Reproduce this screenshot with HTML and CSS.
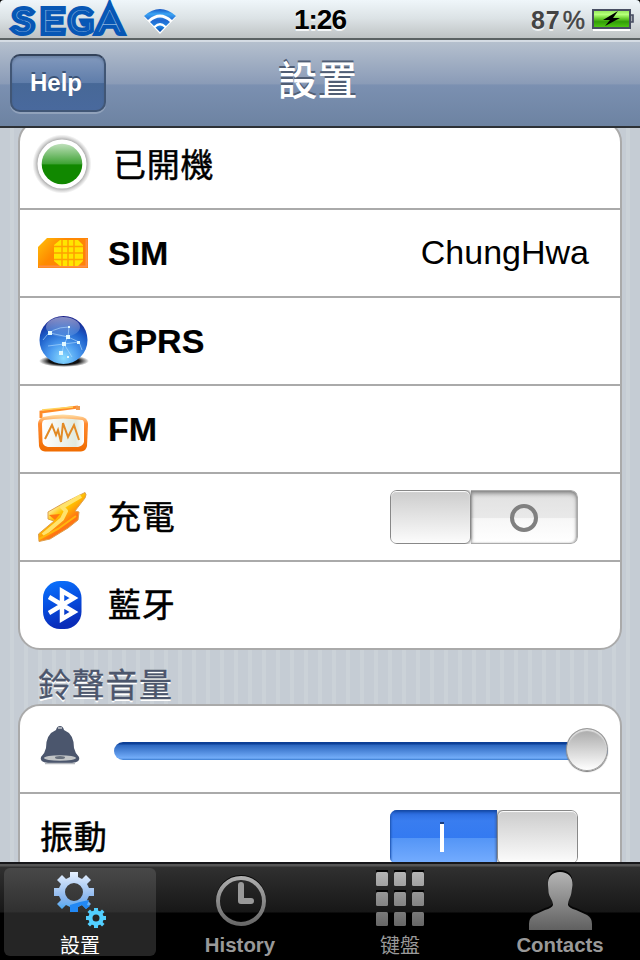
FILE: index.html
```html
<!DOCTYPE html>
<html lang="zh-Hant">
<head>
<meta charset="utf-8">
<title>設置</title>
<link rel="stylesheet" href="styles.css">
</head>
<body>
<div class="phone">
  <header class="status">
    <div class="status-left">
      <svg class="sega" width="122" height="40" viewBox="0 0 122 40">
        <text x="5" y="31.500" textLength="20" lengthAdjust="spacingAndGlyphs">S</text><text x="33" y="31.500" textLength="22" lengthAdjust="spacingAndGlyphs">E</text><text x="61" y="31.500" textLength="23" lengthAdjust="spacingAndGlyphs">G</text><text x="90" y="31.500" textLength="23" lengthAdjust="spacingAndGlyphs">A</text>
      </svg>
      <svg class="wifi" width="34" height="28" viewBox="0 0 34 28">
        <defs><linearGradient id="wf" x1="0" y1="0" x2="0" y2="1"><stop offset="0" stop-color="#1758c4"/><stop offset=".22" stop-color="#3ba4f4"/><stop offset=".5" stop-color="#2167cf"/><stop offset=".75" stop-color="#2387e5"/><stop offset="1" stop-color="#0747a9"/></linearGradient></defs>
        <path d="M1 10Q17-5 33 10L17 27Z" fill="#fff"/>
        <path d="M1 9Q17-5 33 9L29 13Q17 2 5 13ZM7 15Q17 6 27 15L23 19Q17 13 11 19ZM12.500 20.500Q17 16.500 21.500 20.500L17 25Z" fill="url(#wf)"/>
      </svg>
    </div>
    <div class="clock">1:26</div>
    <div class="power">
      <span>87<i>%</i></span>
      <svg width="42" height="22" viewBox="0 0 42 22">
        <defs><linearGradient id="bt" x1="0" y1="0" x2="0" y2="1"><stop offset="0" stop-color="#8de354"/><stop offset=".25" stop-color="#b5ff79"/><stop offset=".48" stop-color="#67cc2b"/><stop offset=".65" stop-color="#329d08"/><stop offset="1" stop-color="#52cc15"/></linearGradient></defs>
        <path d="M1 21H38" stroke="#fff" stroke-width="2"/>
        <path d="M38 6h3v7h-3" fill="#a8adb4" stroke="#474d62" stroke-width="1.6"/>
        <rect x="1" y="1" width="37" height="18" fill="url(#bt)" stroke="#474d62" stroke-width="2"/>
        <path d="M26 2L11 11H18L13 17L28 9H21Z" fill="#000"/>
      </svg>
    </div>
  </header>
  <nav class="navbar">
    <button class="help">Help</button>
    <h1>設置</h1>
  </nav>
  <main class="content">
    <section class="card first">
      <div class="row state">
        <svg class="ico" width="60" height="60" viewBox="0 0 60 60">
          <defs>
            <radialGradient id="halo"><stop offset=".84" stop-color="#b5b5b5"/><stop offset=".9" stop-color="#d5d5d5"/><stop offset="1" stop-color="#fff"/></radialGradient>
            <linearGradient id="gr" x1="0" y1="0" x2="0" y2="1"><stop offset="0" stop-color="#bfe0bb"/><stop offset=".5" stop-color="#3ea234"/><stop offset=".52" stop-color="#118800"/><stop offset="1" stop-color="#118800"/></linearGradient>
          </defs>
          <circle cx="30" cy="30" r="29.500" fill="url(#halo)"/><circle cx="30" cy="30" r="24.500" fill="#fff"/><circle cx="30" cy="30" r="20.300" fill="url(#gr)"/>
        </svg>
        <span class="label">已開機</span>
      </div>
      <div class="row">
        <svg class="ico" width="50" height="30" viewBox="0 0 50 30">
          <defs><linearGradient id="sim" x1="0" y1="0" x2="1" y2=".5"><stop offset="0" stop-color="#ffc20a"/><stop offset=".45" stop-color="#ff8a00"/><stop offset="1" stop-color="#ff8208"/></linearGradient></defs>
          <path d="M0 9L9 0H50V30H0Z" fill="url(#sim)"/><path d="M1 28.500H49M48.500 1V29" stroke="#ff8e45" stroke-width="2"/>
          <path d="M22 2H40L45 7V23L40 28H22L16 23V7Z" fill="#ffe500"/>
          <path d="M24 2V28M30 2V28M36 2V28M16 8.500H45M16 15H45M16 21.500H45" stroke="#ffa000" stroke-width="1.500"/>
        </svg>
        <span class="label en">SIM</span><span class="value">ChungHwa</span>
      </div>
      <div class="row">
        <svg class="ico" width="50" height="50" viewBox="0 0 50 50">
          <defs>
            <radialGradient id="gl" cx=".5" cy=".88" r=".88"><stop offset="0" stop-color="#8adcff"/><stop offset=".35" stop-color="#4c9cf0"/><stop offset=".7" stop-color="#1b5cc8"/><stop offset="1" stop-color="#161b86"/></radialGradient>
            <radialGradient id="sh"><stop offset=".6" stop-color="#111"/><stop offset="1" stop-color="#111" stop-opacity="0"/></radialGradient>
            <linearGradient id="gs" x1="0" y1="0" x2="0" y2="1"><stop offset="0" stop-color="#fff" stop-opacity=".5"/><stop offset="1" stop-color="#fff" stop-opacity=".08"/></linearGradient>
          </defs>
          <ellipse cx="26" cy="45" rx="25" ry="6" fill="url(#sh)"/>
          <circle cx="25.500" cy="24" r="24" fill="url(#gl)"/>
          <ellipse cx="25" cy="11" rx="17" ry="10" fill="url(#gs)"/>
          <path d="M5 24Q13 11 31 11L30 21L26 28L24 37M12 17L30 21L41 26L44 34M26 28L41 26M10 30L26 28L34 41" fill="none" stroke="#b6ddff" stroke-opacity=".6" stroke-width="1"/>
          <path d="M10 15h4v4h-4zM28 19h4v4h-4zM24 26h4v4h-4zM21 35h4v4h-4zM39 25h3v3h-3zM30 10h2v2h-2zM29 40h2v2h-2z" fill="#e3f9ff"/>
        </svg>
        <span class="label en">GPRS</span>
      </div>
      <div class="row">
        <svg class="ico" width="50" height="46" viewBox="0 0 50 46">
          <defs><linearGradient id="fm" x1="0" y1="0" x2="0" y2="1"><stop offset="0" stop-color="#ffe1aa"/><stop offset=".25" stop-color="#ff8a30"/><stop offset="1" stop-color="#f06c00"/></linearGradient><linearGradient id="screen"><stop offset="0" stop-color="#fff"/><stop offset=".8" stop-color="#e1eadf"/><stop offset="1" stop-color="#fff"/></linearGradient></defs>
          <path d="M3 12V6L40 1" fill="none" stroke="#ff8b28" stroke-width="3"/><path d="M4 4L35 1" stroke="#ffd35b" stroke-width="1.500"/><path d="M38 0h4v4h-4z" fill="#f19a4e"/>
          <path d="M5 11Q25 6 45 11Q50 13 50 18L49 40Q48 45 43 45.500H7Q2 45 1 40L0 18Q0 13 5 11Z" fill="url(#fm)"/>
          <path d="M6 14Q25 11 44 14Q46 14 46 18V36Q45 40 40 41H10Q5 40 4.500 36L4 18Q4 15 6 14Z" fill="url(#screen)"/>
          <path d="M7 33L14 19L18 29L20 24L23 36L25 17L30 31L36 19L41 34" fill="none" stroke="#e28a24" stroke-width="2"/>
        </svg>
        <span class="label en">FM</span>
      </div>
      <div class="row">
        <svg class="ico" width="50" height="50" viewBox="0 0 50 50">
          <defs><linearGradient id="el" x1="0" y1="0" x2=".8" y2="1"><stop offset="0" stop-color="#ffb53e"/><stop offset=".33" stop-color="#fff0a1"/><stop offset=".48" stop-color="#ffc400"/><stop offset=".68" stop-color="#ff7314"/><stop offset="1" stop-color="#ff8b16"/></linearGradient></defs>
          <path d="M47 .5Q49 2 47 6L37 19L41 20L40 28L30 36L12 47L1 49.500L.5 42L16 29L10 27V20L24 12Z" fill="url(#el)" stroke="#dda04e"/>
          <path d="M43 4L24 15L28 19L24 27L5 43" fill="none" stroke="#ffe36c" stroke-width="4" stroke-linejoin="round"/><path d="M11 23L22 22L17 28Z" fill="#ff7810"/><path d="M1 47L20 37L38 24" fill="none" stroke="#ffb60d" stroke-width="2"/>
        </svg>
        <span class="label">充電</span>
        <div class="switch off"><div class="knob"></div><div class="face"><i class="ring"></i></div></div>
      </div>
      <div class="row">
        <svg class="ico" width="50" height="48" viewBox="0 0 50 48">
          <defs><linearGradient id="bl" x1="0" y1="0" x2=".25" y2="1"><stop offset="0" stop-color="#0b75ff"/><stop offset=".5" stop-color="#0650e2"/><stop offset="1" stop-color="#0a2cb8"/></linearGradient></defs>
          <rect x="5" y="0" width="38.500" height="48" rx="17" fill="url(#bl)"/>
          <path d="M11 16L36 31L24 38V10L36 17L11 32" fill="none" stroke="#fff" stroke-width="4.500"/>
        </svg>
        <span class="label">藍牙</span>
      </div>
    </section>
    <h2>鈴聲音量</h2>
    <section class="card second">
      <div class="row volume">
        <svg class="bell" width="40" height="40" viewBox="0 0 40 40">
          <path d="M16 4Q17 0 20 0Q23 0 24 4Q34 8 34 22Q35 27 39 31Q41 36 32 37H8Q-1 36 1 31Q5 27 6 22Q6 8 16 4Z" fill="#4b566d"/>
          <ellipse cx="20" cy="32" rx="16" ry="2.800" fill="#c2c5c7"/><ellipse cx="20" cy="31.500" rx="5" ry="1.500" fill="#68707d"/><path d="M5 37.500H35" stroke="#b6b9be" stroke-width="1.500"/><path d="M18 2H22" stroke="#a9adb6" stroke-width="2"/>
        </svg>
        <div class="slider"><div class="thumb"></div></div>
      </div>
      <div class="row vibrate"><span class="label">振動</span><div class="switch on"><div class="face"><i class="bar"></i></div><div class="knob"></div></div></div>
    </section>
  </main>
  <footer class="tabs">
    <div class="tab active">
      <svg width="56" height="58" viewBox="0 0 56 58">
        <defs><linearGradient id="g1" x1="0" y1="0" x2="0" y2="1"><stop offset="0" stop-color="#e7f1ff"/><stop offset=".65" stop-color="#89b5ed"/><stop offset=".8" stop-color="#6db0f0"/><stop offset="1" stop-color="#2ba5f4"/></linearGradient>
        <path id="cog" d="M-4-20H4V-15L8-13L12-17L17-12L13-8L15-4H20V4H15L13 8L17 12L12 17L8 13L4 15V20H-4V15L-8 13L-12 17L-17 12L-13 8L-15 4H-20V-4H-15L-13-8L-17-12L-12-17L-8-13L-4-15ZM9 0A9 9 0 1 0-9 0A9 9 0 1 0 9 0Z" fill-rule="evenodd"/></defs>
        <use href="#cog" x="22" y="20" fill="url(#g1)"/><path d="M18 33Q26 30 37 28L35 33L38 34L34 37L30 33L26 35V40H18Z" fill="#2288f4"/><g transform="translate(44 46) scale(.5)"><circle r="11" fill="none" stroke="#52cfff" stroke-width="8"/><use href="#cog" fill="#52cfff"/></g>
      </svg>
      <span>設置</span>
    </div>
    <div class="tab">
      <svg width="56" height="58" viewBox="0 0 56 58">
        <defs><linearGradient id="gy" gradientUnits="userSpaceOnUse" x1="0" y1="0" x2="0" y2="58"><stop offset="0" stop-color="#b5b5b5"/><stop offset="1" stop-color="#606060"/></linearGradient></defs>
        <circle cx="29" cy="28" r="23" fill="none" stroke="#050505" stroke-width="4"/>
        <circle cx="29" cy="29" r="23" fill="none" stroke="url(#gy)" stroke-width="4"/><path d="M29 13V29H39" fill="none" stroke="#999" stroke-width="6" stroke-linecap="round" stroke-linejoin="round"/>
      </svg>
      <span class="en">History</span>
    </div>
    <div class="tab">
      <svg width="56" height="58" viewBox="0 0 56 58">
        <g fill="#050505"><rect x="4" y="-2" width="12" height="13"/><rect x="22" y="-2" width="12" height="13"/><rect x="40" y="-2" width="12" height="13"/><rect x="4" y="18" width="12" height="13"/><rect x="22" y="18" width="12" height="13"/><rect x="40" y="18" width="12" height="13"/></g>
        <g fill="url(#gy)"><rect x="4" y="0" width="12" height="14" rx="1.500"/><rect x="22" y="0" width="12" height="14" rx="1.500"/><rect x="40" y="0" width="12" height="14" rx="1.500"/><rect x="4" y="20" width="12" height="14" rx="1.500"/><rect x="22" y="20" width="12" height="14" rx="1.500"/><rect x="40" y="20" width="12" height="14" rx="1.500"/><rect x="4" y="40" width="12" height="14" rx="1.500"/><rect x="22" y="40" width="12" height="14" rx="1.500"/><rect x="40" y="40" width="12" height="14" rx="1.500"/></g>
      </svg>
      <span>键盤</span>
    </div>
    <div class="tab">
      <svg width="66" height="58" viewBox="0 0 66 58">
        <path d="M33 0C41 0 46 5 45.500 13L44.500 20C44 25 41 28 41 33Q42 36 49 38L60 43Q65 46 65 52V58H2V52Q2 46 7 43L18 38Q25 36 26 33C26 28 22 25 21.500 20L21 13C20.500 5 25 0 33 0Z" fill="#050505" transform="translate(0 -2)"/>
        <path d="M33 0C41 0 46 5 45.500 13L44.500 20C44 25 41 28 41 33Q42 36 49 38L60 43Q65 46 65 52V58H2V52Q2 46 7 43L18 38Q25 36 26 33C26 28 22 25 21.500 20L21 13C20.500 5 25 0 33 0Z" fill="url(#gy)"/>
      </svg>
      <span class="en">Contacts</span>
    </div>
  </footer>
</div>
</body>
</html>
```
FILE: styles.css
```css
* { box-sizing: border-box; }
body { margin: 0; background: #000; }
svg { display: block; flex: none; overflow: visible; }
.phone { width: 640px; height: 960px; overflow: hidden; display: flex; flex-direction: column; font-family: "Liberation Sans", "Noto Sans CJK TC", sans-serif; }
.status { height: 40px; flex: none; display: grid; grid-template-columns: 1fr auto 1fr; background: linear-gradient(#eff6fa, #dce3e6 45%, #bec3c4 38px, #5b6263 38px); border-radius: 4px 4px 0 0; }
.status-left { display: flex; padding: 0 0 0 8px; gap: 13px; }
.wifi { margin-top: 7px; }
.sega text { font: 100 31px Lato, sans-serif; fill: #c4dcef; stroke: #0757b5; stroke-width: 8px; stroke-linejoin: miter; paint-order: stroke; }
.clock { font-weight: 700; font-size: 28px; line-height: 40px; letter-spacing: -1px; text-shadow: 0 2px 0 #f4f7f8; }
.power { display: flex; justify-content: flex-end; align-items: flex-start; padding: 9px 6px 0 0; gap: 6px; font-weight: 700; font-size: 25px; line-height: 22px; color: #444; text-shadow: 0 2px 0 #eef1f2; letter-spacing: 1px; }
.power i { font-style: normal; font-weight: 400; margin-left: 2px; -webkit-text-stroke: .5px #444; }
.navbar { height: 88px; flex: none; display: grid; grid-template-columns: 106px 1fr 106px; align-items: start; background: linear-gradient(#b5c0ce, #8a9bb7 50%, #7b90b1 51%, #6d83a2); border-top: 2px solid #d5dce4; border-bottom: 2px solid #2d3136; }
.help { width: 96px; height: 58px; margin: 12px 0 0 10px; padding: 0 4px 0 0; border: 2px solid #415675; border-top-color: #33425a; border-radius: 10px; background: linear-gradient(#8299bd, #5f7daa 50%, #476897 51%, #49699d); box-shadow: 0 2px 0 #91a2bb, inset 0 2px 2px #43577755; color: #fff; font: 700 24px/54px "Liberation Sans", sans-serif; text-shadow: 0 -2px 0 #3b5376; }
h1 { margin: 0 5px 0 0; text-align: center; font-size: 40px; line-height: 79px; font-weight: 500; color: #fff; text-shadow: 0 -2px 0 #505e74; }
.content { height: 734px; flex: none; overflow: hidden; padding: 0 18px; background: repeating-linear-gradient(90deg, #c5ccd4 0 10px, #cbd2d8 10px 14px); }
.card { background: #fff; border: 2px solid #aaa; border-radius: 22px; }
.first { margin-top: -8px; height: 530px; }
.row { height: 88px; border-bottom: 2px solid #aaa; display: flex; align-items: center; padding: 0 42px 0 18px; }
.row:last-child { border-bottom: 0; height: 86px; }
.ico { margin-right: 20px; }
.state .ico { margin-left: -6px; margin-right: 21px; margin-top: -2px; }
.label { font-size: 33px; line-height: 50px; padding-top: 2px; font-weight: 400; -webkit-text-stroke: .5px #000; letter-spacing: .7px; color: #000; }
.label.en { font-size: 34px; font-weight: 700; letter-spacing: 0; padding-top: 0; -webkit-text-stroke: .2px #000; }
.value { margin-left: auto; margin-right: -11px; margin-top: -2px; font-size: 34px; }
.switch { width: 188px; height: 54px; margin-left: auto; border-radius: 7px; overflow: hidden; display: flex; }
.knob { width: 81px; flex: none; border: 1px solid #888; border-radius: 6px; background: linear-gradient(#ccc, #fcfcfc); box-shadow: 0 0 3px #666, inset 0 1px 1px #fff; position: relative; }
.face { flex: 1; display: flex; align-items: center; justify-content: center; }
.off .face { border: 1px solid #aaa; border-left: 0; border-radius: 0 7px 7px 0; background: linear-gradient(#e1e1e1, #e9e9e9 52%, #f7f7f7 53%, #fff); box-shadow: inset 0 3px 5px -1px #777, inset -1px 0 2px #bbb; padding-top: 2px; }
.ring { width: 28px; height: 28px; border: 4px solid #808080; border-radius: 50%; }
.on .face { background: linear-gradient(#2867d8, #397df0 20%, #347af1 51%, #5495f6 52%, #75adff); box-shadow: inset 0 2px 3px #1447a2, inset 1px 0 2px #2862c2; padding-right: 4px; }
.bar { width: 4px; height: 30px; background: #fff; border-top: 2px solid #173d80; }
h2 { margin: 0 0 0 20px; height: 54px; font-size: 33px; line-height: 71px; font-weight: 400; letter-spacing: .7px; color: #4c566c; -webkit-text-stroke: .3px #4c566c; text-shadow: 0 2px 0 #fff; }
.second { height: 178px; }
.volume { padding-left: 20px; padding-right: 12px; }
.bell { margin-bottom: 7px; margin-right: 34px; }
.slider { flex: 1; height: 18px; margin-top: 3px; border-radius: 9px; background: linear-gradient(#0c3f96 0 2px, #2b66bf 3px, #73adf9 16px, #387ad0); display: flex; align-items: center; justify-content: flex-end; }
.thumb { width: 42px; height: 43px; margin-top: -3px; border: 1px solid #999; border-radius: 50%; background: linear-gradient(#a8a8a8, #fff); box-shadow: 0 1px 1px #777, inset 0 2px 1px #ddd; flex: none; }
.vibrate { padding-left: 20px; }
.tabs { height: 98px; flex: none; display: grid; grid-template-columns: repeat(4, 1fr); border-top: 2px solid #17171a; background: linear-gradient(#555 0 2px, #303030 3px, #171717 48px, #000 49px); padding-top: 4px; }
.tab { height: 88px; margin: 0 4px; display: flex; flex-direction: column; align-items: center; color: #999; font-size: 20px; line-height: 28px; border-radius: 6px; }
.tab svg { margin-top: 4px; }
.tab span { margin-top: 2px; }
.tab .en { font-weight: 700; font-size: 20.400px; margin-top: 1px; }
.active { background: linear-gradient(#484848, #303030 50%, #252525 51%); color: #fff; }
```
